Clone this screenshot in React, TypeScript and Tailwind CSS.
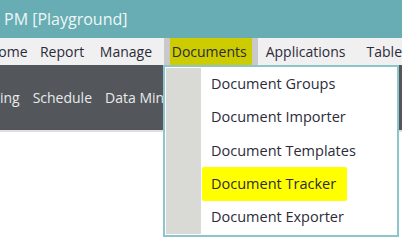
const items = ["Document Groups", "Document Importer", "Document Templates", "Document Tracker", "Document Exporter"];

export default function App() {
  return (
    <div className="relative w-[402px] h-[244px] overflow-hidden bg-white font-['Open_Sans',sans-serif]">
      <div className="h-[38px] bg-[#67adb3] flex items-center pl-[4px] text-[16px] text-[#eef7f7]">
        PM [Playground]
      </div>
      <div className="h-[27px] bg-[#f0f0f0] flex items-center text-[14px] text-[#2c2b3a] whitespace-nowrap">
        <span className="ml-[-12px] w-[52px]">Home</span>
        <span className="w-[60px]">Report</span>
        <span className="w-[64px]">Manage</span>
        <div className="h-full bg-[#c9c9c9] px-[6px] flex items-center">
          <span className="h-full flex items-center bg-[#cccc00] pl-[2px] pr-[5px]">Documents</span>
        </div>
        <span className="ml-[8px] w-[101px]">Applications</span>
        <span>Table</span>
      </div>
      <div className="h-[65px] bg-[#53575b] flex items-center text-[14px] text-[#e8eaec] whitespace-nowrap">
        <span className="ml-[-37px] mr-[13px]">Planning</span>
        <span className="mr-[13px]">Schedule</span>
        <span>Data Mining</span>
      </div>
      <div className="h-[2px] bg-[#dfdfdf]" />

      <div className="absolute left-[163px] top-[65px] w-[236px] h-[172px] border-2 border-[#8cc6ca] bg-white flex">
        <div className="w-[35px] bg-[#d9d9d5] my-[1px] ml-[1px]" />
        <div className="flex-1 flex flex-col pl-[10px]">
          {items.map((it) => (
            <div key={it} className="h-[33.4px] flex items-center text-[14.5px] text-[#2c2b3a]">
              <span className={it === "Document Tracker" ? "bg-[#ffff00] -ml-[9px] pl-[9px] pr-[11px] py-[6px] rounded-[2px]" : ""}>
                {it}
              </span>
            </div>
          ))}
        </div>
      </div>
    </div>
  );
}
